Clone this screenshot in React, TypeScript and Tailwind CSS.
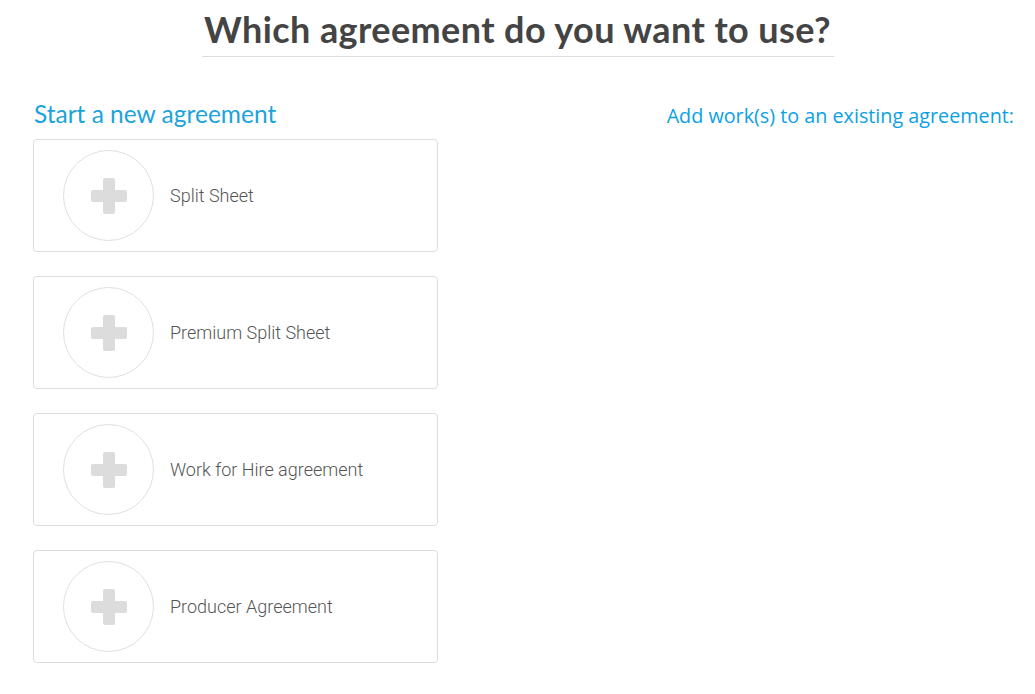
import { useState } from 'react'

const agreements = ['Split Sheet', 'Premium Split Sheet', 'Work for Hire agreement', 'Producer Agreement']

function PlusIcon() {
  return (
    <svg width="36" height="36" viewBox="0 0 36 36">
      <rect x="12" y="0" width="12" height="36" rx="2" fill="#dcdcdc" />
      <rect x="0" y="12" width="36" height="12" rx="2" fill="#dcdcdc" />
    </svg>
  )
}

export default function App() {
  const [picked, setPicked] = useState<string | null>(null)

  return (
    <div className="min-h-screen bg-white">
      {/* Title */}
      <div className="flex justify-center pt-[8px]">
        <h1 className="w-[632px] whitespace-nowrap border-b border-[#dddddd] pb-[6px] text-center font-['Lato',sans-serif] text-[36px] font-bold leading-[42px] tracking-[0.4px] text-[#444444]">
          Which agreement do you want to use?
        </h1>
      </div>

      <div className="mt-[43px] flex items-start justify-between pl-[33px] pr-[21px]">
        {/* New agreement */}
        <div className="w-[405px]">
          <h2 className="pl-[1px] font-['Lato',sans-serif] text-[24.5px] leading-[28px] text-[#1ba3dc]">Start a new agreement</h2>
          <div className="mt-[11px] flex flex-col gap-[24px]">
            {agreements.map(name => (
              <button
                key={name}
                onClick={() => setPicked(name)}
                className={`flex h-[113px] items-center rounded-[4px] border bg-white pl-[29px] text-left ${picked === name ? 'border-[#1ba3dc]' : 'border-[#dddddd]'}`}
              >
                <span className="flex h-[91px] w-[91px] items-center justify-center rounded-full border border-[#e0e0e0]">
                  <PlusIcon />
                </span>
                <span className="ml-[16px] font-['Roboto',sans-serif] text-[18px] font-light text-[#555555]">{name}</span>
              </button>
            ))}
          </div>
        </div>

        {/* Existing agreement */}
        <div className="pt-[3px]">
          <h2 className="font-['Open_Sans',sans-serif] text-[19.75px] leading-[26px] text-[#0ba1e4]">
            Add work(s) to an existing agreement:
          </h2>
        </div>
      </div>
    </div>
  )
}
